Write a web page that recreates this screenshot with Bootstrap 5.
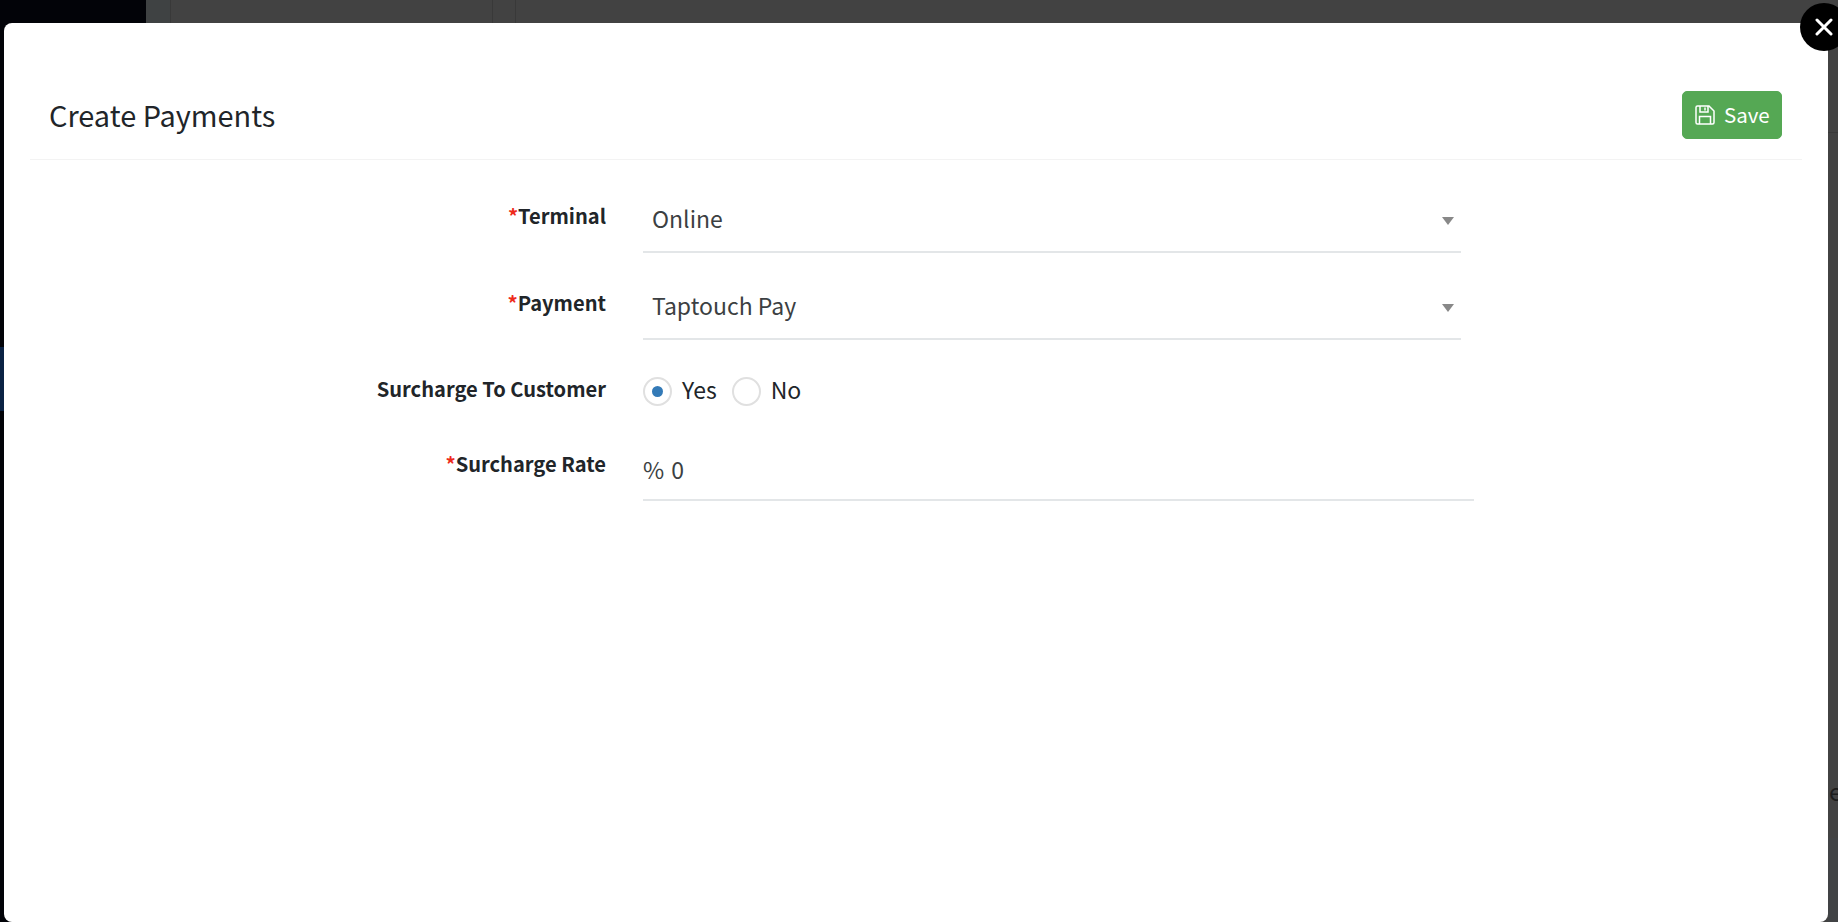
<!DOCTYPE html>
<html lang="en">
<head>
<meta charset="utf-8">
<title>Create Payments</title>
<link href="https://cdn.jsdelivr.net/npm/bootstrap@5.3.0/dist/css/bootstrap.min.css" rel="stylesheet">
<style>
html,body{height:922px;overflow:hidden;}
body{background:#424242;font-family:"Noto Sans CJK SC","Noto Sans",sans-serif;color:#212529;font-size:22px;}
.stage{position:relative;width:1838px;height:922px;overflow:hidden;background:#424242;}
.side-dark{position:absolute;left:0;top:0;bottom:0;width:146px;background:#020308;}
.side-blue{position:absolute;left:0;top:347px;width:146px;height:64px;background:#0a2244;}
.side-strip{position:absolute;left:146px;top:0;bottom:0;width:24px;background:#3f4243;}
.vline{position:absolute;top:0;height:23px;width:1px;background:#393939;}
.hline{position:absolute;left:1828px;right:0;height:1px;background:#393939;}
.low-strip{position:absolute;left:1828px;right:0;top:838px;bottom:0;background:#414345;}
.peek{position:absolute;left:1829px;top:775px;font-size:24px;line-height:32px;color:#1c1c1c;}
.sheet{position:absolute;left:4px;top:23px;width:1824px;height:899px;background:#fff;border-radius:8px;padding:0 26px;}
.close-dot{position:absolute;left:1800px;top:3px;width:48px;height:48px;border-radius:50%;background:#000;display:flex;align-items:center;justify-content:center;padding:0;border:0;}
.sheet-head{padding:68px 20px 20px 19px;border-bottom:1px solid #f3f3f3;}
.sheet-title{font-size:28.900px;font-weight:400;line-height:40px;margin:-2px 0 0;}
.btn-save{background:#55a854;border:1px solid #55a854;color:#fff;font-size:20.500px;line-height:28px;padding:0 12px 2px;border-radius:5px;height:48px;width:100px;gap:9px;}
.btn-save:hover{background:#55a854;color:#fff;}
.btn-save svg{flex:none;margin-top:2px;}
.form-rows{padding-top:35px;}
.f-row{display:flex;}
.f-label{width:576px;flex:none;text-align:right;font-weight:700;font-size:20.100px;line-height:28px;margin:7px 0 0;}
.req{color:#ee2a1b;}
.f-ctl{margin-left:37px;width:818px;height:58px;border-bottom:2px solid #e3e6e8;padding:0 7px 10px 9px;align-items:center;font-size:23px;color:#3c3f42;}
.caret{width:0;height:0;border-left:6px solid transparent;border-right:6px solid transparent;border-top:8px solid #888;margin-top:6px;}
.r1{margin-bottom:29px;}
.r2{margin-bottom:36px;}
.r3{margin-bottom:36px;}
.r3 .f-label{margin-top:-1px;}
.radios{margin-left:37px;height:31px;align-items:center;font-size:23px;}
.radio-o{width:29px;height:29px;border-radius:50%;border:2px solid #e0e0e0;display:flex;align-items:center;justify-content:center;margin-right:10px;}
.radio-o i{display:block;width:11px;height:11px;border-radius:50%;background:#337ab7;}
.radio-t{margin:-5px 15px 0 0;}
.f-ctl.wide{width:831px;padding:6px 0 10px 0;word-spacing:2px;}
</style>
</head>
<body>
<div class="stage">
  <div class="side-dark"></div>
  <div class="side-blue"></div>
  <div class="side-strip"></div>
  <div class="vline" style="left:170px"></div>
  <div class="vline" style="left:492px"></div>
  <div class="vline" style="left:515px"></div>
  <div class="hline" style="top:132px"></div>
  <div class="low-strip"></div>
  <div class="peek">e</div>
  <div class="sheet">
    <div class="sheet-head d-flex justify-content-between align-items-center">
      <h5 class="sheet-title">Create Payments</h5>
      <button type="button" class="btn btn-save d-flex align-items-center">
        <svg width="20" height="20" viewBox="0 0 20 20" fill="none" stroke="#fff" stroke-width="1.500"><path d="M1 2.500a1.500 1.500 0 0 1 1.500-1.500H14l5 5v11.500a1.500 1.500 0 0 1-1.500 1.500H2.500A1.500 1.500 0 0 1 1 17.500z"/><path d="M5 1v6h8V1"/><path d="M10 2.500v3"/><path d="M4.500 19v-7.500h11V19"/></svg>
        <span>Save</span>
      </button>
    </div>
    <div class="form-rows">
      <div class="f-row r1">
        <label class="f-label"><span class="req">*</span>Terminal</label>
        <div class="f-ctl d-flex justify-content-between"><span>Online</span><span class="caret"></span></div>
      </div>
      <div class="f-row r2">
        <label class="f-label"><span class="req">*</span>Payment</label>
        <div class="f-ctl d-flex justify-content-between"><span>Taptouch Pay</span><span class="caret"></span></div>
      </div>
      <div class="f-row r3">
        <label class="f-label">Surcharge To Customer</label>
        <div class="radios d-flex">
          <span class="radio-o"><i></i></span><span class="radio-t">Yes</span>
          <span class="radio-o"></span><span class="radio-t">No</span>
        </div>
      </div>
      <div class="f-row">
        <label class="f-label"><span class="req">*</span>Surcharge Rate</label>
        <div class="f-ctl wide d-flex"><span>% 0</span></div>
      </div>
    </div>
  </div>
  <button type="button" class="close-dot" aria-label="Close">
    <svg width="18" height="18" viewBox="0 0 18 18" stroke="#fff" stroke-width="3" stroke-linecap="round"><path d="M2 2l14 14M16 2L2 16"/></svg>
  </button>
</div>
<script src="https://cdn.jsdelivr.net/npm/bootstrap@5.3.0/dist/js/bootstrap.bundle.min.js"></script>
</body>
</html>
